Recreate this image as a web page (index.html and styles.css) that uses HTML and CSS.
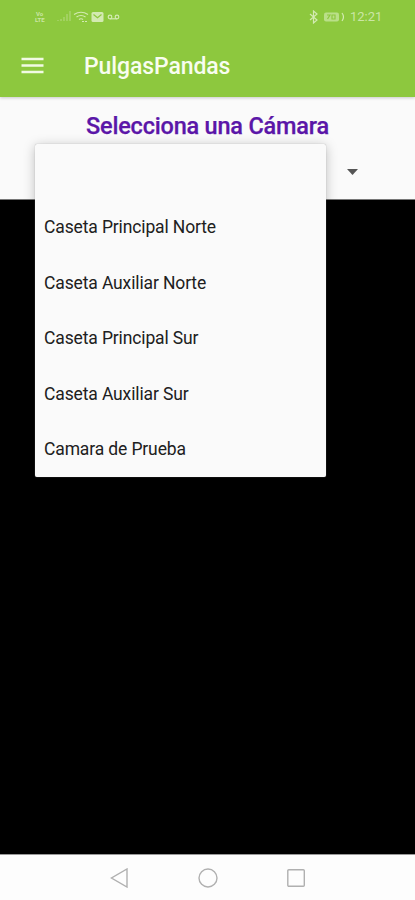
FILE: index.html
```html
<!DOCTYPE html>
<html lang="es">
<head>
<meta charset="utf-8">
<meta name="viewport" content="width=device-width">
<title>PulgasPandas</title>
<link rel="stylesheet" href="styles.css">
</head>
<body>
<div class="screen">
  <header class="header">
    <div class="status">
      <div class="network"><span>Vo</span><span>LTE</span></div>
      <svg class="signals" width="64" height="14" viewBox="0 0 64 14">
        <path class="faint" d="M1 11v-1M4 11V9M7 11V7M10 11V4M13 11V1"/>
        <path class="line" d="M17 4.500Q24 0 31 4.500M19.500 7Q24 4 28.500 7M22 9.500Q24 8 26 9.500"/>
        <path class="line" d="M25 11.500h2M28 11.500h2"/>
        <rect class="fill" x="34.500" y="2" width="12" height="10" rx="1.500"/>
        <path class="cut" d="M36.500 4.500l4 3.200 4-3.200"/>
        <circle class="line" cx="53" cy="7" r="1.800"/><circle class="line" cx="60" cy="7" r="1.800"/>
        <path class="line" d="M53 8.800h7"/>
      </svg>
      <svg class="power" width="38" height="14" viewBox="0 0 38 14">
        <path class="line" d="M1 4l7 6-3.500 3V1L8 4l-7 6"/>
        <rect class="battery" x="15" y="2.500" width="15" height="9" rx="2"/>
        <path class="cut" d="M18 5h3l-2.500 4M23 5h3v4h-3z"/>
        <path class="line" d="M33 3q3 4 0 8"/>
      </svg>
      <span class="time">12:21</span>
    </div>
    <div class="toolbar">
      <svg class="menu" width="23" height="17" viewBox="0 0 23 17"><path d="M.5 2h22M.5 8.500h22M.5 15h22"/></svg>
      <h1 class="app-name">PulgasPandas</h1>
    </div>
  </header>
  <main class="content">
    <section class="picker">
      <h2 class="title">Selecciona una Cámara</h2>
      <svg class="caret" width="11" height="6" viewBox="0 0 11 6"><path d="M0 0h11L5.500 6z"/></svg>
      <ul class="dropdown">
        <li></li>
        <li>Caseta Principal Norte</li>
        <li>Caseta Auxiliar Norte</li>
        <li>Caseta Principal Sur</li>
        <li>Caseta Auxiliar Sur</li>
        <li>Camara de Prueba</li>
      </ul>
    </section>
    <section class="video"></section>
  </main>
  <nav class="navigation">
    <svg width="20" height="20" viewBox="0 0 20 20"><path d="M17 1v18L1.500 10z"/></svg>
    <svg width="20" height="20" viewBox="0 0 20 20"><circle cx="10" cy="10" r="9"/></svg>
    <svg width="20" height="20" viewBox="0 0 20 20"><rect x="1.800" y="1.800" width="16.500" height="16.500" rx="1"/></svg>
  </nav>
</div>
</body>
</html>
```
FILE: styles.css
```css
* { box-sizing: border-box; }
body { margin: 0; font-family: Roboto, "Liberation Sans", sans-serif; }
h1, h2, ul { margin: 0; padding: 0; }
svg { display: block; flex: none; }

.screen { display: flex; flex-direction: column; height: 900px; overflow: hidden; }

.header {
  position: relative;
  z-index: 1;
  height: 97px;
  background: #8dc83e;
  box-shadow: 0 1px 3px rgba(0, 0, 0, .2);
}
.status { display: flex; align-items: center; height: 34px; padding-left: 35px; color: #cbe6a5; }
.network { display: flex; flex-direction: column; width: 22px; font-size: 6px; line-height: 6px; font-weight: 700; }
.network span:first-child { padding-left: 1px; }
.power { margin-left: 188px; }
.time { margin-left: 3px; font-size: 13px; line-height: 16px; }
.line, .faint, .cut { fill: none; stroke: #d3eab2; stroke-width: 1.2; }
.faint { opacity: .5; }
.cut { stroke: #8dc83e; }
.fill { fill: #d3eab2; }
.battery { fill: #badf89; }

.toolbar { display: flex; align-items: center; height: 63px; padding: 0 0 0 21px; }
.menu { fill: none; stroke: #f1fae3; stroke-width: 2.4; }
.app-name { margin: 2px 0 0 40px; color: #f8fdf0; font-size: 23px; letter-spacing: -.1px; line-height: 30px; font-weight: 500; }

.content { flex: 1; display: flex; flex-direction: column; }
.picker { position: relative; height: 103px; padding-top: 13px; background: #fafafa; border-bottom: 1px solid #777; }
.title { color: #5b16a8; font-size: 23.5px; letter-spacing: -.2px; line-height: 32px; font-weight: 500; text-align: center; -webkit-text-stroke: .25px #5b16a8; }
.caret { margin: 27px 0 0 347px; fill: #555; }
.video { flex: 1; background: #000; }

.dropdown {
  position: absolute;
  left: 35px;
  top: 47px;
  width: 291px;
  height: 333px;
  list-style: none;
  background: #fafafa;
  border-radius: 2px;
  box-shadow: 0 2px 12px rgba(0, 0, 0, .25), 0 0 1px #aaa;
}
.dropdown li { height: 55.4px; padding-left: 9px; color: #202020; font-size: 17.5px; letter-spacing: -.13px; line-height: 57px; white-space: nowrap; }

.navigation {
  display: flex;
  justify-content: center;
  align-items: center;
  gap: 68px;
  height: 46px;
  background: #fdfdfd;
  border-top: 1px solid #999;
}
.navigation svg { fill: none; stroke: #b0b0b0; stroke-width: 1.4; }
```
